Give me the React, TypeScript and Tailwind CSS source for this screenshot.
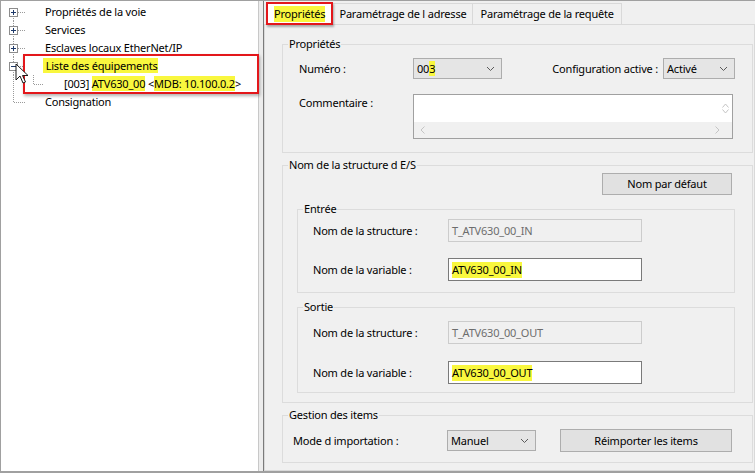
import React from 'react';

const dots = { stroke: '#9a9a9a', strokeDasharray: '1 1' };

function Connector({ variant, box }: { variant: 'first' | 'mid' | 'last'; box?: 'plus' | 'minus' }) {
  return (
    <svg width="44" height="18" className="shrink-0">
      {variant !== 'first' && <line x1="12.5" y1="0" x2="12.5" y2="9" {...dots} />}
      {variant !== 'last' && <line x1="12.5" y1="9" x2="12.5" y2="18" {...dots} />}
      <line x1="13" y1="9.5" x2="24" y2="9.5" {...dots} />
      {box && <rect x="8.5" y="5.5" width="8" height="8" fill="#fff" stroke="#8c8c8c" />}
      {box && <line x1="10" y1="9.5" x2="15" y2="9.5" stroke="#1f3a6a" />}
      {box === 'plus' && <line x1="12.5" y1="7" x2="12.5" y2="12" stroke="#1f3a6a" />}
    </svg>
  );
}

function ChildConnector() {
  return (
    <svg width="63" height="18" className="shrink-0">
      <line x1="12.5" y1="0" x2="12.5" y2="18" {...dots} />
      <line x1="32.5" y1="0" x2="32.5" y2="9" {...dots} />
      <line x1="33" y1="9.5" x2="43" y2="9.5" {...dots} />
    </svg>
  );
}

function Chevron() {
  return (
    <svg width="9" height="6" viewBox="0 0 9 6" className="shrink-0">
      <path d="M1 1 L4.5 4.5 L8 1" fill="none" stroke="#5a5a5a" strokeWidth="1" />
    </svg>
  );
}

function Combo({ width, children }: { width: string; children: React.ReactNode }) {
  return (
    <div
      className={`flex h-[21px] items-center justify-between border border-[#adadad] bg-[#e5e5e5] pl-[3px] pr-[6px] ${width}`}
    >
      <span>{children}</span>
      <Chevron />
    </div>
  );
}

function Hl({ children }: { children: React.ReactNode }) {
  return <span className="bg-[#f9f73e]">{children}</span>;
}

function Field({ label, disabled, children, top }: { label: string; disabled?: boolean; children: React.ReactNode; top?: string }) {
  return (
    <div className={`flex items-center ${top ?? ''}`}>
      <span className="w-[135px] shrink-0">{label}</span>
      <div
        className={`flex h-[23px] w-[194px] items-center pl-[3px] ${
          disabled ? 'border border-[#cccccc] bg-[#f0f0f0] text-[#6d6d6d]' : 'border border-[#7a7a7a] bg-white'
        }`}
      >
        {children}
      </div>
    </div>
  );
}

export default function App() {
  return (
    <div className="flex h-[473px] w-[755px] whitespace-nowrap border-l border-t border-b-2 border-[#a0a0a0] bg-white font-['Noto_Sans','Open_Sans',sans-serif] text-[11px] leading-[16px] tracking-[-0.2px] text-black">
      {/* arbre */}
      <div className="relative w-[257px] shrink-0 bg-white pt-[2px]">
        <div className="flex h-[18px] items-center">
          <Connector variant="first" box="plus" />
          <span>Propriétés de la voie</span>
        </div>
        <div className="flex h-[18px] items-center">
          <Connector variant="mid" box="plus" />
          <span>Services</span>
        </div>
        <div className="flex h-[18px] items-center">
          <Connector variant="mid" box="plus" />
          <span>Esclaves locaux EtherNet/IP</span>
        </div>
        <div className="flex h-[18px] items-center">
          <Connector variant="mid" box="minus" />
          <span className="-ml-[2px]">
            <Hl>&nbsp;Liste des équipements</Hl>
          </span>
        </div>
        <div className="flex h-[18px] items-center">
          <ChildConnector />
          <span>
            [003] <Hl>ATV630_00</Hl> &lt;<Hl>MDB: 10.100.0.2</Hl>&gt;
          </span>
        </div>
        <div className="flex h-[18px] items-center">
          <Connector variant="last" />
          <span>Consignation</span>
        </div>

        <div className="absolute left-[22px] top-[53px] h-[40px] w-[236px] border-2 border-[#e3171b] shadow-[1px_2px_3px_rgba(0,0,0,0.3)]" />
        <svg width="14" height="22" viewBox="0 0 14 22" className="absolute left-[14px] top-[62px]">
          <path d="M1 1 L1 17 L5 13 L8 20 L10.5 19 L7.5 12.5 L13 12.5 Z" fill="#fff" stroke="#1a1a1a" strokeWidth="1" strokeLinejoin="round" />
        </svg>
      </div>

      {/* séparateur */}
      <div className="w-[5px] shrink-0 border-l border-[#c8c8c8] bg-[#ececec]" />
      <div className="w-[1px] shrink-0 bg-[#7a7a7a]" />

      {/* onglets */}
      <div className="flex flex-1 flex-col bg-[#f0f0f0]">
        <div className="flex h-[23px] items-end pl-[2px]">
          <div className="z-10 -mb-[1px] flex h-[23px] items-center border-2 border-[#e3171b] bg-white px-[6px] shadow-[1px_2px_2px_rgba(0,0,0,0.3)]">
            <Hl>Propriétés</Hl>
          </div>
          <div className="flex h-[21px] items-center border-r border-t border-[#d9d9d9] px-[6px]">Paramétrage de l adresse</div>
          <div className="flex h-[21px] items-center border-r border-t border-[#d9d9d9] px-[7px]">Paramétrage de la requête</div>
        </div>

        <div className="flex flex-1 flex-col border border-[#d9d9d9] bg-[#f0f0f0] pl-[17px] pr-[1px]">
          {/* Propriétés */}
          <fieldset className="mt-[11px] border border-[#dcdcdc] pb-[13px] pl-[16px] pr-[17px] pt-[6px]">
            <legend className="-ml-[11px] px-[1px]">Propriétés</legend>
            <div className="flex items-center">
              <span className="w-[114px] shrink-0">Numéro :</span>
              <Combo width="w-[89px]">
                00<Hl>3</Hl>
              </Combo>
              <span className="ml-auto mr-[5px]">Configuration active :</span>
              <Combo width="w-[72px]">Activé</Combo>
            </div>
            <div className="mt-[15px] flex items-start">
              <span className="w-[114px] shrink-0 pt-[1px]">Commentaire :</span>
              <div className="flex h-[45px] w-[320px] flex-col border border-[#a0a0a0] bg-white">
                <div className="flex flex-1">
                  <div className="flex-1" />
                  <div className="flex w-[13px] flex-col items-center justify-center gap-[1px]">
                    <svg width="7" height="5" viewBox="0 0 7 5"><path d="M0.5 4.5 L3.5 1 L6.5 4.5" fill="none" stroke="#c4c4c4" /></svg>
                    <svg width="7" height="5" viewBox="0 0 7 5"><path d="M0.5 0.5 L3.5 4 L6.5 0.5" fill="none" stroke="#c4c4c4" /></svg>
                  </div>
                </div>
                <div className="flex h-[16px] items-center justify-between bg-[#f0f0f0] pl-[6px] pr-[12px]">
                  <svg width="5" height="8" viewBox="0 0 5 8"><path d="M4.5 0.5 L1 4 L4.5 7.5" fill="none" stroke="#c4c4c4" /></svg>
                  <svg width="5" height="8" viewBox="0 0 5 8"><path d="M0.5 0.5 L4 4 L0.5 7.5" fill="none" stroke="#c4c4c4" /></svg>
                </div>
              </div>
            </div>
          </fieldset>

          {/* E/S */}
          <fieldset className="mt-[4px] border border-[#dcdcdc] pb-[9px] pl-[14px] pr-[17px]">
            <legend className="-ml-[9px] px-[1px]">Nom de la structure d E/S</legend>
            <div className="flex justify-end pr-[3px]">
              <div className="flex h-[22px] w-[130px] items-center justify-center border border-[#adadad] bg-[#e1e1e1]">
                Nom par défaut
              </div>
            </div>
            <fieldset className="mt-[6px] border border-[#dcdcdc] pb-[11px] pl-[15px] pt-[2px]">
              <legend className="-ml-[10px] px-[1px]">Entrée</legend>
              <Field label="Nom de la structure :" disabled>
                T_ATV630_00_IN
              </Field>
              <Field label="Nom de la variable :" top="mt-[16px]">
                <Hl>ATV630_00_IN</Hl>
              </Field>
            </fieldset>
            <fieldset className="mt-[6px] border border-[#dcdcdc] pb-[8px] pl-[15px] pt-[6px]">
              <legend className="-ml-[10px] px-[1px]">Sortie</legend>
              <Field label="Nom de la structure :" disabled>
                T_ATV630_00_OUT
              </Field>
              <Field label="Nom de la variable :" top="mt-[17px]">
                <Hl>ATV630_00_OUT</Hl>
              </Field>
            </fieldset>
          </fieldset>

          {/* Gestion */}
          <fieldset className="mt-[4px] border border-[#dcdcdc] pb-[10px] pl-[10px] pr-[20px] pt-[6px]">
            <legend className="-ml-[5px] px-[1px]">Gestion des items</legend>
            <div className="flex items-center">
              <span className="w-[154px] shrink-0">Mode d importation :</span>
              <Combo width="w-[89px]">Manuel</Combo>
              <div className="ml-auto flex h-[23px] w-[172px] items-center justify-center border border-[#adadad] bg-[#e1e1e1]">
                Réimporter les items
              </div>
            </div>
          </fieldset>
        </div>
      </div>
    </div>
  );
}
